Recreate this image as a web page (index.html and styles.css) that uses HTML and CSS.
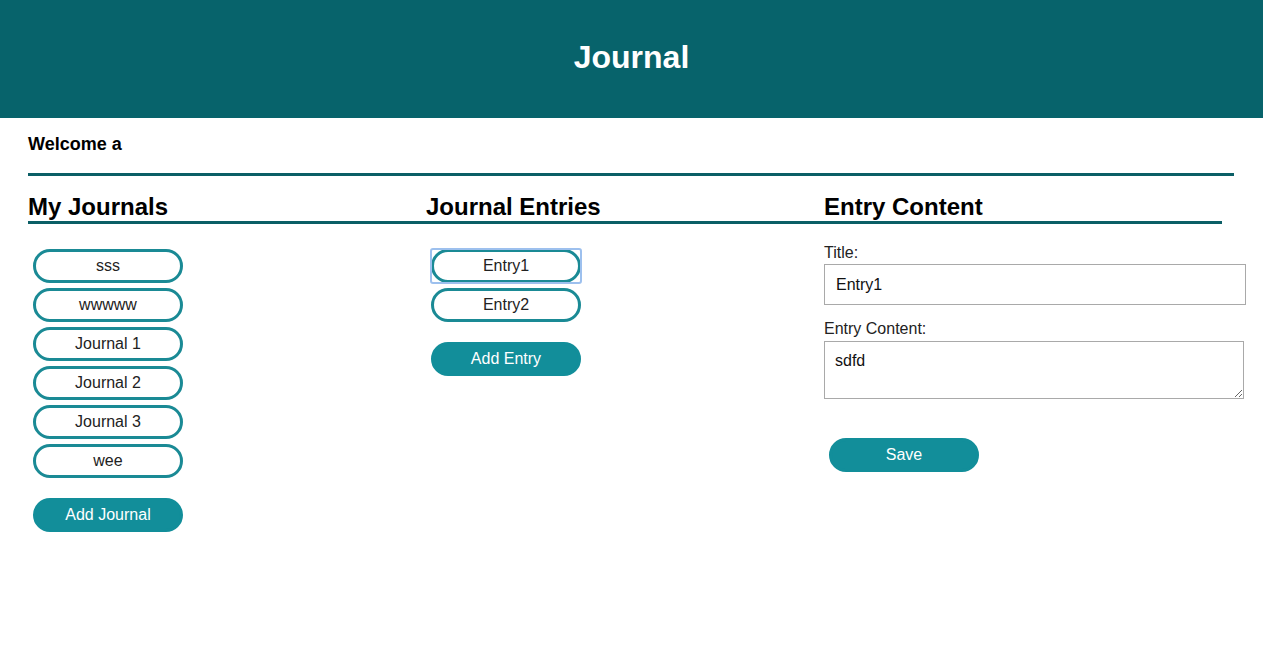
FILE: index.html
```html
<!DOCTYPE html>
<html lang="en">
<head>
<meta charset="utf-8">
<title>Journal</title>
<link rel="stylesheet" href="styles.css">
</head>
<body>
<header class="top">
  <h1 class="top-title">Journal</h1>
</header>
<main class="page">
  <p class="welcome">Welcome a</p>
  <div class="rule"></div>
  <div class="cols">
    <section class="col">
      <h2 class="col-title">My Journals</h2>
      <div class="list">
        <button class="pill">sss</button>
        <button class="pill">wwwww</button>
        <button class="pill">Journal 1</button>
        <button class="pill">Journal 2</button>
        <button class="pill">Journal 3</button>
        <button class="pill">wee</button>
      </div>
      <button class="pill pill-fill">Add Journal</button>
    </section>
    <section class="col">
      <h2 class="col-title">Journal Entries</h2>
      <div class="list">
        <span class="focus-wrap"><button class="pill">Entry1</button></span>
        <button class="pill">Entry2</button>
      </div>
      <button class="pill pill-fill">Add Entry</button>
    </section>
    <section class="col">
      <h2 class="col-title">Entry Content</h2>
      <div class="form">
        <label class="lbl">Title:</label>
        <input class="field" type="text" value="Entry1">
        <label class="lbl lbl-2">Entry Content:</label>
        <textarea class="area">sdfd</textarea>
        <button class="pill pill-fill save">Save</button>
      </div>
    </section>
  </div>
</main>
</body>
</html>
```
FILE: styles.css
```css
* { box-sizing: border-box; }
html, body { margin: 0; padding: 0; background: #fff; }
body { font-family: "Liberation Sans", Arial, sans-serif; color: #111; }

.top {
  height: 118px;
  background: #07636b;
  display: flex;
  align-items: center;
  justify-content: center;
}
.top-title {
  margin: 0;
  color: #fff;
  font-size: 32px;
  font-weight: bold;
  line-height: 36px;
  position: relative;
  top: -2px;
}

.page { padding: 0 29px 0 28px; }

.welcome {
  margin: 0;
  padding-top: 16px;
  font-size: 18px;
  font-weight: bold;
  line-height: 21px;
  color: #000;
}
.rule {
  margin-top: 18px;
  height: 3px;
  background: #0b5f66;
}

.cols {
  display: grid;
  grid-template-columns: 398px 398px 398px;
  margin-top: 17px;
}
.col { display: flex; flex-direction: column; align-items: flex-start; }
.col-title {
  align-self: stretch;
  margin: 0;
  font-size: 24px;
  line-height: 28px;
  font-weight: bold;
  color: #000;
  border-bottom: 3px solid #0b5f66;
}

.list {
  display: flex;
  flex-direction: column;
  align-items: flex-start;
  gap: 5px;
  margin-top: 25px;
}

.pill {
  width: 150px;
  height: 34px;
  margin: 0 5px;
  border: 3px solid #1a8a95;
  border-radius: 17px;
  background: #fff;
  font-family: "Liberation Sans", Arial, sans-serif;
  font-size: 16px;
  color: #222;
  padding: 0;
  line-height: 28px;
  cursor: pointer;
}
.pill-fill {
  margin-top: 20px;
  background: #128e9a;
  border-color: #128e9a;
  color: #fff;
}

.focus-wrap {
  position: relative;
  display: inline-block;
  height: 34px;
}
.focus-wrap::after {
  content: "";
  position: absolute;
  left: 4px; right: 4px; top: -1px; bottom: -1px;
  border: 2px solid #9dc0ee;
  border-radius: 3px;
  pointer-events: none;
}

.form {
  display: flex;
  flex-direction: column;
  align-items: flex-start;
  margin-top: 20px;
}
.lbl {
  font-size: 16px;
  line-height: 18px;
  color: #222;
}
.field {
  margin-top: 2px;
  width: 422px;
  height: 41px;
  padding: 0 11px;
  border: 1px solid #a9a9a9;
  font-family: "Liberation Sans", Arial, sans-serif;
  font-size: 16px;
  color: #111;
  outline: none;
}
.lbl-2 { margin-top: 15px; }
.area {
  margin-top: 3px;
  width: 420px;
  height: 58px;
  padding: 10px 10px;
  border: 1px solid #a9a9a9;
  font-family: "Liberation Sans", Arial, sans-serif;
  font-size: 16px;
  line-height: 18px;
  color: #111;
  resize: both;
}
.save { margin-top: 39px; }
```
